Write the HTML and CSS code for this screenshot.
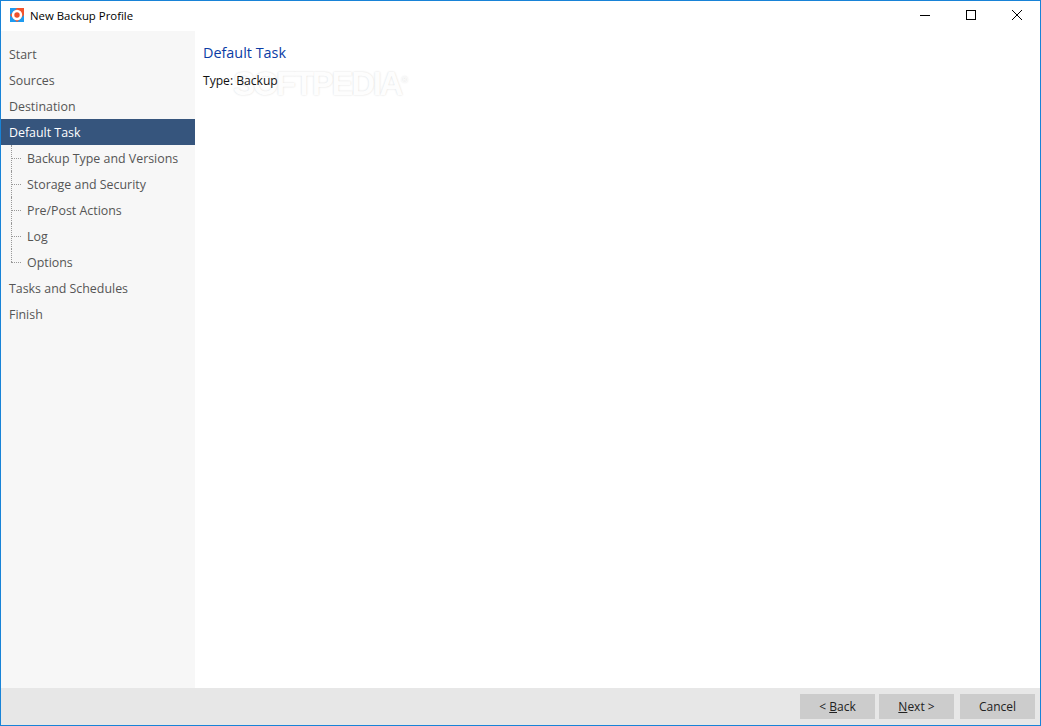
FILE: index.html
```html
<!DOCTYPE html>
<html lang="en">
<head>
<meta charset="utf-8">
<title>New Backup Profile</title>
<link rel="stylesheet" href="styles.css">
</head>
<body>
<div class="window">
  <header class="titlebar">
    <svg class="app-icon" width="14" height="14" viewBox="0 0 14 14">
      <rect width="14" height="14" fill="#f2542d"/>
      <path d="M0 0H7L0 7ZM14 14H7L14 7ZM0 14V7L7 14Z" fill="#1e9bf0"/>
      <circle cx="7" cy="7" r="5.2" fill="#fff"/>
      <circle cx="7" cy="7" r="2.7" fill="#f0502a"/>
    </svg>
    <span class="title">New Backup Profile</span>
    <div class="controls">
      <span class="control"><svg width="10" height="10" viewBox="0 0 10 10"><path d="M0 5.5H10" stroke="#000" fill="none"/></svg></span>
      <span class="control"><svg width="10" height="10" viewBox="0 0 10 10"><rect x=".5" y=".5" width="9" height="9" stroke="#000" fill="none"/></svg></span>
      <span class="control"><svg width="10" height="10" viewBox="0 0 10 10"><path d="M0 0L10 10M10 0L0 10" stroke="#000" stroke-width="1" fill="none"/></svg></span>
    </div>
  </header>
  <div class="body">
    <nav class="sidebar">
      <div class="item">Start</div>
      <div class="item">Sources</div>
      <div class="item">Destination</div>
      <div class="item selected">Default Task</div>
      <div class="item sub">Backup Type and Versions</div>
      <div class="item sub">Storage and Security</div>
      <div class="item sub">Pre/Post Actions</div>
      <div class="item sub">Log</div>
      <div class="item sub last">Options</div>
      <div class="item">Tasks and Schedules</div>
      <div class="item">Finish</div>
    </nav>
    <main class="content">
      <div class="watermark">SOFTPEDIA<sup class="reg">®</sup></div>
      <h1 class="heading">Default Task</h1>
      <p class="type">Type: Backup</p>
    </main>
  </div>
  <footer class="footer">
    <button class="btn">&lt; <u>B</u>ack</button>
    <button class="btn"><u>N</u>ext &gt;</button>
    <button class="btn btn-cancel">Cancel</button>
  </footer>
</div>
</body>
</html>
```
FILE: styles.css
```css
* { box-sizing: border-box; }
html, body { margin: 0; height: 100%; }
body { font-family: "Open Sans", "Noto Sans", sans-serif; font-size: 12.4px; background: #fff; overflow: hidden; }
.window { width: 1041px; height: 726px; border: 1px solid #1883d7; display: flex; flex-direction: column; background: #fff; }
.titlebar { height: 30px; flex: none; display: flex; align-items: center; padding-left: 9px; }
.app-icon { flex: none; margin-top: -2px; }
.title { margin-left: 6px; font-size: 11.4px; color: #000; margin-top: -2px; }
.controls { margin-left: auto; display: flex; align-self: flex-start; }
.control { width: 46px; height: 28px; display: flex; align-items: center; justify-content: center; }
.body { flex: 1; display: flex; min-height: 0; }
.sidebar { width: 194px; flex: none; background: #f7f7f7; padding-top: 10px; }
.item { height: 26px; line-height: 28px; padding-left: 8px; color: #555; position: relative; white-space: nowrap; }
.item.selected { background: #36557d; color: #fff; }
.item.sub { padding-left: 26px; }
.item.sub::before { content: ""; position: absolute; left: 10px; top: 0; bottom: 0; border-left: 1px dotted #999; }
.item.sub.last::before { bottom: 13px; }
.item.sub::after { content: ""; position: absolute; left: 10px; top: 13px; width: 10px; border-top: 1px dotted #999; }
.content { flex: 1; position: relative; padding: 11px 8px; }
.heading { position: relative; margin: 0; font-size: 14.4px; font-weight: 400; line-height: 22px; color: #0a3ca5; }
.type { position: relative; margin: 8px 0 0; font-size: 12.1px; line-height: 18px; color: #111; }
.watermark { position: absolute; left: 38px; top: 36px; font-family: "Liberation Sans", sans-serif; font-size: 33px; letter-spacing: -2.3px; line-height: 34px; font-weight: 700; color: #fdfdfd; text-shadow: 0 0 2px #d8d8d8; }
.reg { font-size: 9px; line-height: 0; letter-spacing: 0; }
.footer { height: 37px; flex: none; background: #e7e7e7; display: flex; justify-content: flex-end; align-items: flex-start; padding: 6px 5px 0 0; }
.btn { width: 75px; height: 25px; border: 0; padding: 0; background: #cccccc; font: inherit; font-size: 12px; color: #222; margin-left: 4px; }
.btn-cancel { margin-left: 6px; }
```
